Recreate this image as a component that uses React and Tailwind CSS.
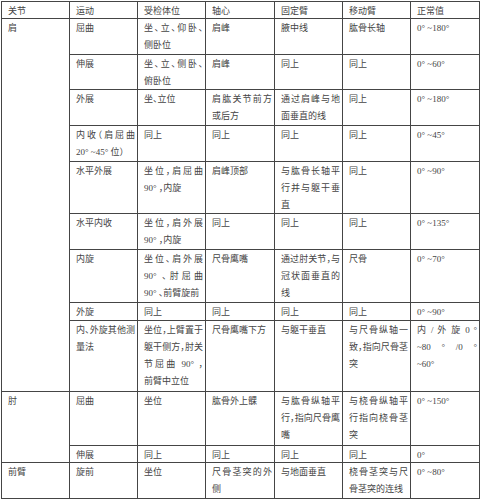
// Joint range-of-motion reference table (shoulder / elbow / forearm)
const rows = [
  { h: 'h-[36px]', joint: { text: ['肩'], span: 9 }, cells: [['屈曲'], ['坐、立、仰卧、', '侧卧位'], ['肩峰'], ['腋中线'], ['肱骨长轴'], ['0° ~180°']] },
  { h: 'h-[35px]', cells: [['伸展'], ['坐、立、侧卧、', '俯卧位'], ['肩峰'], ['同上'], ['同上'], ['0° ~60°']] },
  { h: 'h-[36px]', cells: [['外展'], ['坐、立位'], ['肩肱关节前方', '或后方'], ['通过肩峰与地', '面垂直的线'], ['同上'], ['0° ~180°']] },
  { h: 'h-[36px]', cells: [['内收（肩屈曲', '20° ~45° 位）'], ['同上'], ['同上'], ['同上'], ['同上'], ['0° ~45°']] },
  { h: 'h-[52px]', cells: [['水平外展'], ['坐位，肩屈曲', '90° ，内旋'], ['肩峰顶部'], ['与肱骨长轴平', '行并与躯干垂', '直'], ['同上'], ['0° ~90°']] },
  { h: 'h-[36px]', cells: [['水平内收'], ['坐位，肩外展', '90° ，内旋'], ['同上'], ['同上'], ['同上'], ['0° ~135°']] },
  { h: 'h-[53px]', cells: [['内旋'], ['坐位、肩外展', '90° 、肘屈曲', '90° 、前臂旋前'], ['尺骨鹰嘴'], ['通过肘关节，与', '冠状面垂直的', '线'], ['尺骨'], ['0° ~70°']] },
  { h: 'h-[18px]', cells: [['外旋'], ['同上'], ['同上'], ['同上'], ['同上'], ['0° ~90°']] },
  { h: 'h-[71px]', cells: [['内、外旋其他测', '量法'], ['坐位，上臂置于', '躯干侧方，肘关', '节屈曲 90° ，', '前臂中立位'], ['尺骨鹰嘴下方'], ['与躯干垂直'], ['与尺骨纵轴一', '致，指向尺骨茎', '突'], ['内 / 外 旋 0 °', '~80 ° /0 °', '~60°']] },
  { h: 'h-[54px]', joint: { text: ['肘'], span: 2 }, cells: [['屈曲'], ['坐位'], ['肱骨外上髁'], ['与肱骨纵轴平', '行，指向尺骨鹰', '嘴'], ['与桡骨纵轴平', '行指向桡骨茎', '突'], ['0° ~150°']] },
  { h: 'h-[17px]', cells: [['伸展'], ['同上'], ['同上'], ['同上'], ['同上'], ['0°']] },
  { h: 'h-[36px]', joint: { text: ['前臂'], span: 1 }, cells: [['旋前'], ['坐位'], ['尺骨茎突的外', '侧'], ['与地面垂直'], ['桡骨茎突与尺', '骨茎突的连线'], ['0° ~80°']] },
];

const header = ['关节', '运动', '受检体位', '轴心', '固定臂', '移动臂', '正常值'];

function Cell({ lines, rowSpan }) {
  return (
    <td rowSpan={rowSpan} className="border border-[#454545] align-top pl-[6px] pr-[2px] pt-[1px] pb-0">
      {lines.map((line, i) => (
        <div
          key={i}
          className={
            i < lines.length - 1
              ? 'h-[17px] whitespace-nowrap text-justify [text-align-last:justify]'
              : 'h-[15px] whitespace-nowrap'
          }
        >
          {line}
        </div>
      ))}
    </td>
  );
}

export default function App() {
  return (
    <div className="w-[481px] h-[500px] bg-white pt-[1px] pl-[1px] overflow-hidden">
      <table
        className="table-fixed border-collapse w-[478px] text-[9px] leading-[17px] text-[#444]"
        style={{ fontFamily: '"Liberation Serif", "Noto Sans CJK SC", serif', fontFeatureSettings: '"halt"' }}
      >
        <colgroup>
          <col className="w-[68px]" />
          <col className="w-[68px]" />
          <col className="w-[68px]" />
          <col className="w-[69px]" />
          <col className="w-[68px]" />
          <col className="w-[68px]" />
          <col className="w-[69px]" />
        </colgroup>
        <tbody>
          <tr className="h-[17px]">
            {header.map((h) => (
              <Cell key={h} lines={[h]} />
            ))}
          </tr>
          {rows.map((row, i) => (
            <tr key={i} className={row.h}>
              {row.joint && <Cell lines={row.joint.text} rowSpan={row.joint.span} />}
              {row.cells.map((c, j) => (
                <Cell key={j} lines={c} />
              ))}
            </tr>
          ))}
        </tbody>
      </table>
    </div>
  );
}
